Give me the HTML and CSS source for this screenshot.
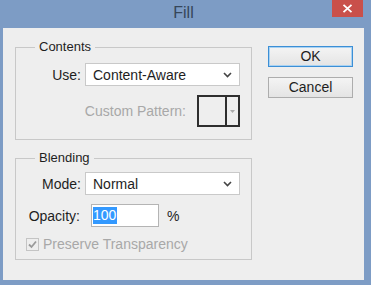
FILE: index.html
```html
<!DOCTYPE html>
<html>
  <head>
    <title>Fill</title>
    <link rel="stylesheet" href="styles.css">
  </head>
  <body>
    <div class="window">
      <div class="titlebar">
        <span class="title">Fill</span>
        <span class="close">
          <svg width="11" height="9" viewBox="0 0 11 9"><path d="M1.5 0.8 L9.5 8.2 M9.5 0.8 L1.5 8.2" stroke="#fff" stroke-width="1.8"/></svg>
        </span>
      </div>

      <div class="client">
        <div class="groups">
          <fieldset class="group">
            <legend>Contents</legend>
            <div class="row">
              <label class="label">Use:</label>
              <div class="select">
                <span>Content-Aware</span>
                <svg class="chevron" width="9" height="6" viewBox="0 0 9 6"><path d="M1 1 L4.5 4.5 L8 1" fill="none" stroke="#444" stroke-width="1.6"/></svg>
              </div>
            </div>
            <div class="row pattern-row">
              <span class="label muted">Custom Pattern:</span>
              <div class="swatch">
                <span class="swatch-box"></span>
                <span class="swatch-arrow">
                  <svg width="5" height="3" viewBox="0 0 5 3"><path d="M0 0 H5 L2.5 3 Z" fill="#aaa"/></svg>
                </span>
              </div>
            </div>
          </fieldset>

          <fieldset class="group blending">
            <legend>Blending</legend>
            <div class="row">
              <label class="label">Mode:</label>
              <div class="select">
                <span>Normal</span>
                <svg class="chevron" width="9" height="6" viewBox="0 0 9 6"><path d="M1 1 L4.5 4.5 L8 1" fill="none" stroke="#444" stroke-width="1.6"/></svg>
              </div>
            </div>
            <div class="row opacity-row">
              <label class="label">Opacity:</label>
              <div class="input"><span class="selected">100</span></div>
              <span class="unit">%</span>
            </div>
            <div class="row check-row">
              <span class="checkbox">
                <svg width="11" height="11" viewBox="0 0 11 11"><path d="M2 5.5 L4.5 8 L9 2.5" fill="none" stroke="#9a9a9a" stroke-width="1.8"/></svg>
              </span>
              <span class="muted">Preserve Transparency</span>
            </div>
          </fieldset>
        </div>

        <div class="buttons">
          <div class="button default">OK</div>
          <div class="button">Cancel</div>
        </div>
      </div>
    </div>
  </body>
</html>
```

FILE: styles.css
```css
body {
    background-color: #7d9cc5;
    color: #1e1e1e;
    font-family: "Liberation Sans", Arial, sans-serif;
    font-size: 13px;
    margin: 0;
}
.window {
    height: 285px;
    width: 371px;
}
.titlebar {
    display: flex;
    height: 28px;
    justify-content: center;
    position: relative;
}
.title {
    color: #36465a;
    font-size: 16px;
    line-height: 25px;
    margin-right: 4px;
}
.close {
    align-items: center;
    background-color: #c9504a;
    display: flex;
    height: 17px;
    justify-content: center;
    position: absolute;
    right: 8px;
    top: 0;
    width: 31px;
}
.client {
    background-color: #eeeeee;
    display: flex;
    height: 252px;
    margin-left: 3px;
    width: 361px;
}
.groups {
    display: flex;
    flex-direction: column;
    gap: 10px;
    padding: 11px 0 0 12px;
}
.group {
    border: 1px solid #c8c8c8;
    margin: 0;
    padding: 8px 11px 12px 0;
    width: 237px;
    box-sizing: border-box;
}
.group legend {
    font-size: 13px;
    line-height: 16px;
    margin-left: 19px;
    padding: 0 4px;
}
.blending {
    padding-bottom: 7px;
    padding-top: 6px;
}
.row {
    align-items: center;
    display: flex;
}
.label {
    font-size: 14px;
    margin-right: 4px;
    text-align: right;
    width: 65px;
}
.muted {
    color: #a8a8a8;
}
.select {
    align-items: center;
    background-color: #fff;
    border: 1px solid #c9c9c9;
    box-sizing: border-box;
    display: flex;
    font-size: 14px;
    height: 23px;
    justify-content: space-between;
    padding: 0 7px 0 7px;
    width: 155px;
}
.pattern-row {
    justify-content: flex-end;
    margin-top: 9px;
}
.pattern-row .label {
    margin-right: 11px;
    width: auto;
}
.swatch {
    border: 2px solid #2e2e2e;
    box-sizing: border-box;
    display: flex;
    height: 32px;
    width: 43px;
}
.swatch-box {
    border-right: 2px solid #2e2e2e;
    flex: 1;
}
.swatch-arrow {
    align-items: center;
    display: flex;
    justify-content: center;
    width: 11px;
}
.opacity-row {
    margin-top: 9px;
}
.opacity-row .label {
    margin-right: 11px;
    width: 64px;
}
.input {
    align-items: center;
    background-color: #fff;
    border: 1px solid #b4b4b4;
    box-sizing: border-box;
    display: flex;
    font-size: 14px;
    height: 23px;
    padding-left: 1px;
    width: 68px;
}
.selected {
    background-color: #3399ff;
    color: #fff;
    line-height: 17px;
    padding-right: 1px;
}
.unit {
    font-size: 14px;
    margin-left: 8px;
}
.check-row {
    font-size: 14px;
    margin-top: 9px;
    padding-left: 10px;
}
.checkbox {
    align-items: center;
    border: 1px solid #c4c4c4;
    box-sizing: border-box;
    display: flex;
    height: 13px;
    justify-content: center;
    margin-right: 4px;
    width: 13px;
}
.buttons {
    display: flex;
    flex-direction: column;
    gap: 10px;
    margin-left: 16px;
    padding-top: 18px;
}
.button {
    background: linear-gradient(#f4f4f4, #e4e4e4);
    border: 1px solid #adadad;
    box-sizing: border-box;
    font-size: 14px;
    height: 21px;
    line-height: 19px;
    text-align: center;
    width: 85px;
}
.button.default {
    border-color: #3c8fd6;
    box-shadow: inset 0 0 0 1px #a9d2f2;
}
```
